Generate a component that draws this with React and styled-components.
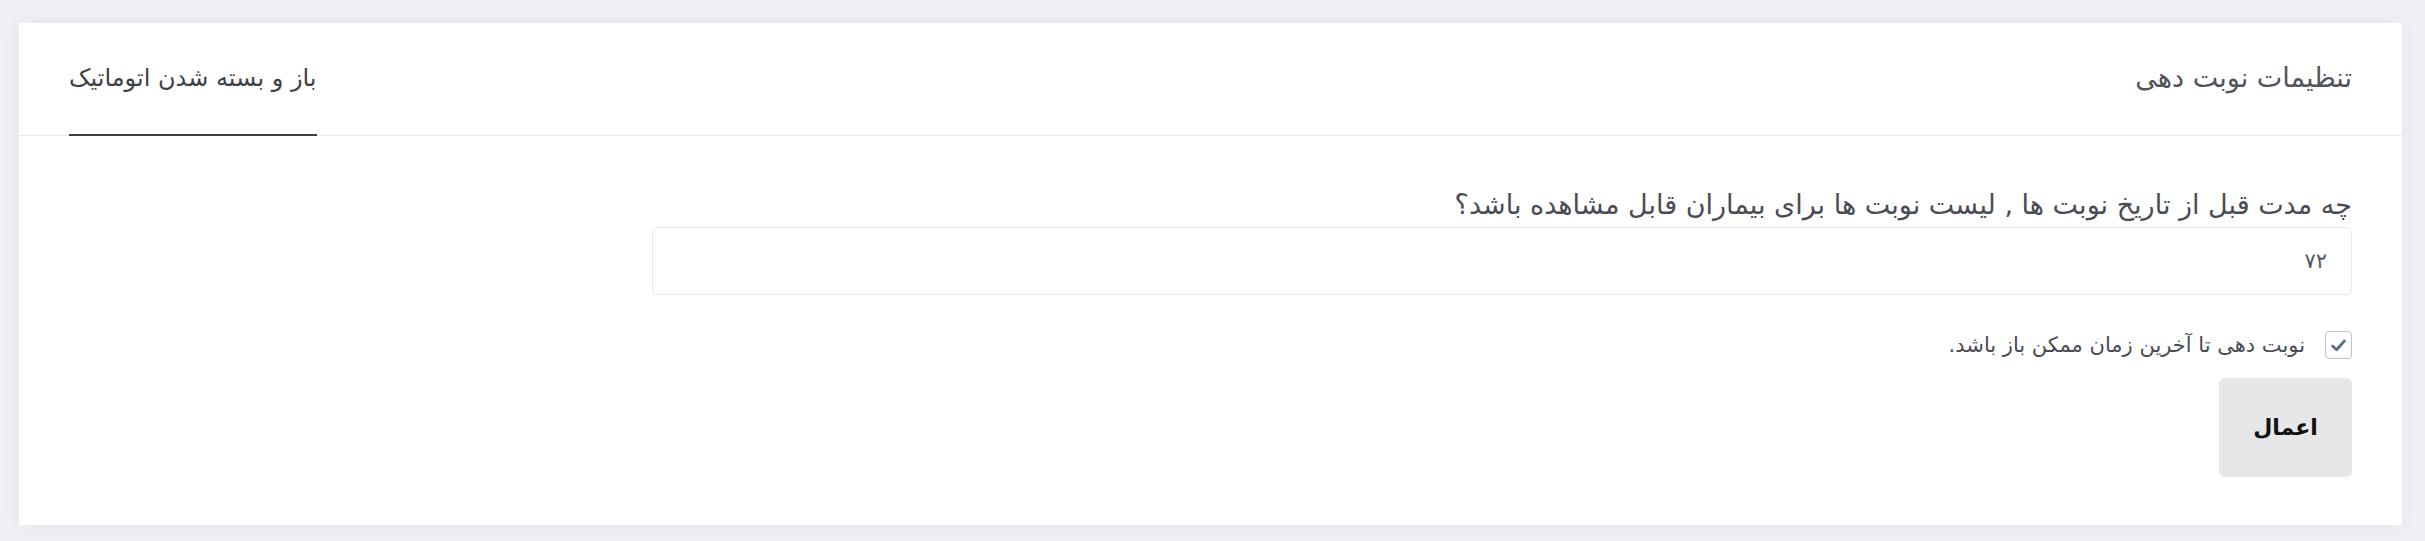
import React, { useState } from 'react';
import styled, { createGlobalStyle } from 'styled-components';

const GlobalStyle = createGlobalStyle`
  html, body {
    margin: 0;
    padding: 0;
    background: #eff0f4;
  }
  body {
    font-family: "DejaVu Sans", sans-serif;
  }
`;

const Page = styled.div`
  direction: rtl;
  height: 100vh;
  box-sizing: border-box;
  padding: 23px 23px 0 19px;
  overflow: hidden;
`;

const Card = styled.div`
  background: #fff;
  box-shadow: 0 0 18px rgba(60, 64, 90, 0.06);
  padding-bottom: 48px;
`;

const Header = styled.div`
  display: flex;
  justify-content: space-between;
  align-items: stretch;
  height: 112px;
  padding: 0 50px;
  border-bottom: 1px solid #e9e9ec;
`;

const Title = styled.h3`
  margin: 0;
  align-self: center;
  padding-bottom: 4px;
  font-size: 27px;
  font-weight: 400;
  color: #52535c;
`;

const Tabs = styled.div`
  display: flex;
`;

const Tab = styled.button`
  font-family: inherit;
  font-size: 24px;
  color: #3f3f48;
  background: none;
  border: none;
  padding: 0 0 1px;
  margin-bottom: -1px;
  border-bottom: 2px solid ${({ active }) => (active ? '#3f3f46' : 'transparent')};
  cursor: pointer;
`;

const Body = styled.div`
  display: grid;
  grid-template-columns: 1700px 1fr;
  padding: 0 50px;
`;

const Form = styled.form`
  display: flex;
  flex-direction: column;
  align-items: flex-start;
  padding-top: 54px;
`;

const Label = styled.label`
  font-size: 27px;
  color: #4a4b55;
  line-height: 30px;
  margin-bottom: 7px;
`;

const Input = styled.input`
  box-sizing: border-box;
  width: 100%;
  height: 68px;
  padding: 0 24px;
  border: 1px solid #e8e8ec;
  border-radius: 5px;
  font-family: inherit;
  font-size: 21px;
  color: #55565f;
  direction: rtl;
  outline: none;
`;

const CheckRow = styled.label`
  display: flex;
  align-items: center;
  gap: 20px;
  margin-top: 36px;
  font-size: 21px;
  line-height: 28px;
  color: #4a4b55;
  cursor: pointer;
`;

const Box = styled.span`
  box-sizing: border-box;
  width: 27px;
  height: 28px;
  border: 1px solid #b9c0d4;
  border-radius: 4px;
  display: flex;
  align-items: center;
  justify-content: center;
  background: #fff;
`;

const Submit = styled.button`
  margin-top: 19px;
  width: 133px;
  height: 99px;
  border: none;
  border-radius: 6px;
  background: #e7e7ea;
  font-family: inherit;
  font-size: 22px;
  font-weight: 700;
  color: #111;
  cursor: pointer;
`;

function App() {
  const [hours, setHours] = useState('۷۲');
  const [open, setOpen] = useState(true);

  return (
    <Page>
      <GlobalStyle />
      <Card>
        <Header>
          <Title>تنظیمات نوبت دهی</Title>
          <Tabs>
            <Tab active>باز و بسته شدن اتوماتیک</Tab>
          </Tabs>
        </Header>
        <Body>
          <Form onSubmit={(e) => e.preventDefault()}>
            <Label htmlFor="hours">
              چه مدت قبل از تاریخ نوبت ها , لیست نوبت ها برای بیماران قابل مشاهده باشد؟
            </Label>
            <Input id="hours" value={hours} onChange={(e) => setHours(e.target.value)} />
            <CheckRow onClick={() => setOpen(!open)}>
              <Box>
                {open && (
                  <svg width="15" height="13" viewBox="0 0 14 12">
                    <path
                      d="M1.5 6.5 L5.2 10 L12.5 1.8"
                      fill="none"
                      stroke="#5b6b8c"
                      strokeWidth="2.6"
                      strokeLinecap="round"
                      strokeLinejoin="round"
                    />
                  </svg>
                )}
              </Box>
              نوبت دهی تا آخرین زمان ممکن باز باشد.
            </CheckRow>
            <Submit type="submit">اعمال</Submit>
          </Form>
        </Body>
      </Card>
    </Page>
  );
}

export default App;
